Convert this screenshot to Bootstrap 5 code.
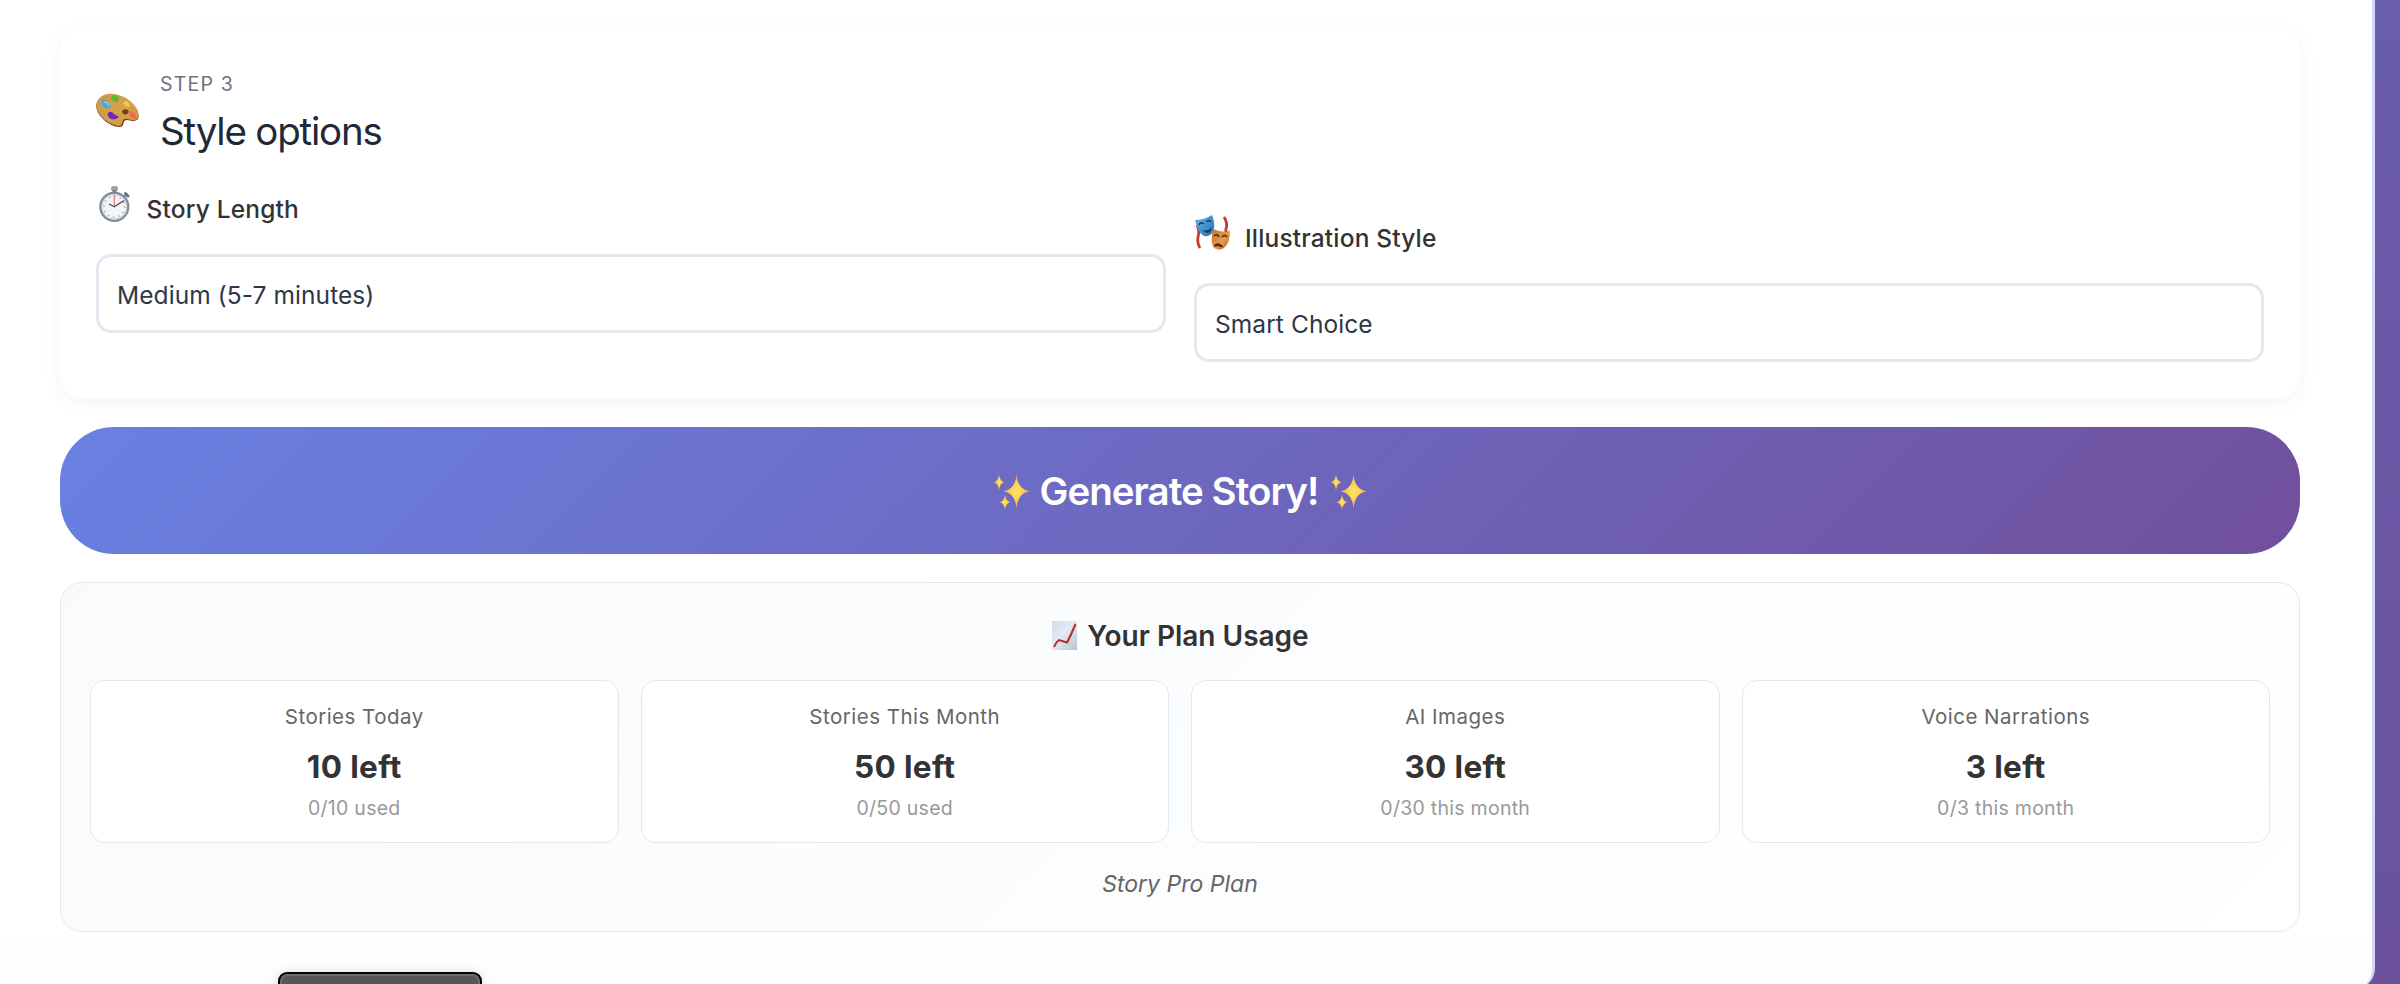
<!DOCTYPE html>
<html lang="en">
<head>
<meta charset="utf-8">
<meta name="viewport" content="width=device-width, initial-scale=1">
<title>Story options</title>
<link rel="stylesheet" href="https://cdn.jsdelivr.net/npm/bootstrap@5.3.0/dist/css/bootstrap.min.css">
<style>
  html, body { height: 100%; }
  body { font-family: Inter, "Liberation Sans", sans-serif; background: linear-gradient(180deg, #6a5dad 0%, #6b519c 100%); overflow: hidden; color: #333; }
  .sheet { width: 2375px; height: 990px; background: linear-gradient(180deg, #fff 94%, #fcfcfc 100%); border-right: 3px solid #d0d9f5; border-bottom-right-radius: 22px; padding: 29px 72px 0 60px; overflow: hidden; }
  .step-card { height: 369px; border-radius: 22px; padding: 36px; background: #fff; box-shadow: 0 4px 20px rgba(0,0,0,.05); }
  .step-head { height: 98px; gap: 21px; }
  .step-label { font-size: 19.5px; line-height: 38px; letter-spacing: 1.2px; color: #6b7280; }
  .step-title { font-size: 38.5px; line-height: 56px; letter-spacing: -1.2px; color: #1f2937; font-weight: 400; }
  .pickers { gap: 28px; }
  .picker-label { height: 91px; font-size: 24.5px; font-weight: 500; line-height: 40px; letter-spacing: .16px; }
  .picker-label span { margin-top: 26px; }
  .picker-box { height: 79px; border: 3px solid #e2e8f0; border-radius: 15px; padding: 3px 18px 0; font-size: 24.5px; letter-spacing: .08px; color: #2d3748; background: #fff; }
  .go { height: 127px; margin-top: 29px; padding-top: 3px; border: 0; border-radius: 54px; color: #fff; font-size: 38.5px; letter-spacing: -.95px; font-weight: 600; background: linear-gradient(135deg, #6981e3 0%, #714f9c 100%); }
  .usage { height: 350px; margin-top: 28px; border: 1px solid #e2e8f0; border-radius: 22px; padding: 31px 29px; background: linear-gradient(135deg, #f8fafc 0%, #fff 100%); }
  .usage-title { height: 66px; font-size: 28px; line-height: 44px; font-weight: 600; padding-left: 1px; }
  .tiles { gap: 22px; }
  .tile { height: 163px; border: 1px solid #e2e8f0; border-radius: 15px; background: #fff; padding-top: 17px; }
  .t-name { font-size: 20.5px; line-height: 38px; letter-spacing: .48px; color: #666; }
  .t-left { font-size: 31.5px; line-height: 61px; letter-spacing: .35px; font-weight: 700; }
  .t-used { font-size: 19.5px; line-height: 22px; letter-spacing: .27px; color: #999; }
  .plan { font-size: 23px; line-height: 34px; margin-top: 24px; font-style: italic; color: #666; }
  .dock { left: 278px; top: 972px; width: 204px; height: 60px; border: 2px solid #000; border-radius: 9px; background: #555658; box-shadow: inset 0 0 0 2px #6b6d6e, 0 0 10px rgba(0,0,0,.12); }
</style>
</head>
<body>
<svg width="0" height="0" class="position-absolute">
  <defs>
    <linearGradient id="wood" x1="0" y1="0" x2="1" y2="1"><stop offset="0" stop-color="#c8964c"/><stop offset=".5" stop-color="#d6a14e"/><stop offset="1" stop-color="#cf9340"/></linearGradient>
    <radialGradient id="gold"><stop offset="0" stop-color="#ffe36a"/><stop offset=".5" stop-color="#fbd04e"/><stop offset="1" stop-color="#e0a04a"/></radialGradient>
    <linearGradient id="paper" x1="0" y1="0" x2="1" y2="1"><stop offset="0" stop-color="#d3dce4"/><stop offset=".45" stop-color="#e3eaf3"/><stop offset="1" stop-color="#b9c3cf"/></linearGradient>
    <linearGradient id="blueface" x1="0" y1="0" x2="1" y2="1"><stop offset="0" stop-color="#64b5ec"/><stop offset="1" stop-color="#2473b8"/></linearGradient>
    <linearGradient id="orangeface" x1="0" y1="0" x2="1" y2="1"><stop offset="0" stop-color="#c4752d"/><stop offset=".6" stop-color="#e59a48"/><stop offset="1" stop-color="#a9561c"/></linearGradient>
    <symbol id="sparkles" viewBox="0 0 36 36">
      <g fill="url(#gold)">
        <path d="M22.500 0Q23.500 15.500 36 17.200Q23.500 19 22.500 35Q21.500 19 9 17.200Q21.500 15.500 22.500 0Z"/>
        <path d="M5 0Q5.600 7.200 10.500 8.300Q5.600 9.400 5 16.500Q4.400 9.400 0 8.300Q4.400 7.200 5 0Z"/>
        <path d="M11 20.500Q11.500 27.200 16.500 28.200Q11.500 29.200 11 36Q10.500 29.200 5.500 28.200Q10.500 27.200 11 20.500Z"/>
      </g>
    </symbol>
  </defs>
</svg>
<main class="sheet">
  <section class="step-card">
    <div class="step-head d-flex">
      <svg width="43" height="35" viewBox="0 0 43 35" style="margin-top:28px">
        <path d="M1 9C6 0 18 0 28 5C38 10 43.500 19 42.500 25C41 29 35 28 31 27C27 27 28 31 26.500 33C23 36 13 32 7 26C1 20-1 14 1 9Z" fill="#6d4218"/>
        <path d="M1.500 8C6-1 18-1 28 4C38 9 44 18 42.500 24C41 28.500 35 27 31 26C26 25 27 30 25 32.500C22 34 13 31 7 25C1 19-1 13 1.500 8ZM28 16.500C25 17.500 26 21.500 29 21.500C33 21.500 34 18 31 16.500Q29 15.800 28 16.500Z" fill="url(#wood)" fill-rule="evenodd"/>
        <path d="M6 7C10 5 12 10 15 13C15 16 10 16 7 13Q4 9 6 7Z" fill="#49a9d8"/><path d="M8 9q4 0 5 4" fill="none" stroke="#7ed3ef" stroke-width="1.500"/>
        <path d="M16 3Q18 1 20 3Q25 5 22 8.500Q17 10 15 6Z" fill="#57b92c"/>
        <path d="M27 10Q30 6 33 10L34 14Q29 14 27 10Z" fill="#f1cb43"/>
        <path d="M34 18Q38 18 41 25Q38 27 34 23Z" fill="#ec6850"/>
        <path d="M12 20Q15 17 18 21L23 24Q19 28 14 25.500Q11 23 12 20Z" fill="#6a2bb5"/>
      </svg>
      <div><div class="step-label"><span>STEP 3</span></div><h2 class="step-title m-0">Style options</h2></div>
    </div>
    <div class="pickers d-flex">
      <div class="flex-fill w-50">
        <div class="picker-label d-flex">
          <svg width="31" height="36" viewBox="0 0 31 36" style="margin:23px 16.500px 0 3px">
            <rect x="12" y="0" width="7" height="5" rx="2" fill="#9ca2aa"/><rect x="13.500" y="4" width="4" height="4" fill="#777e88"/>
            <path d="M25 11L28 8" stroke="#6e7886" stroke-width="1.800"/><path d="M26.500 7.500l2.500 2.500" stroke="#67717e" stroke-width="3" stroke-linecap="round"/>
            <circle cx="15.300" cy="20.800" r="14" fill="#f4f5f5" stroke="#7f8b9c" stroke-width="2.200"/>
            <circle cx="15.300" cy="20.800" r="12.300" fill="none" stroke="#c5cdd6" stroke-width="1"/>
            <circle cx="15.300" cy="20.800" r="10.300" fill="none" stroke="#999" stroke-width="1.600" stroke-dasharray="1 4.390"/>
            <path d="M15.300 20.500V9" stroke="#ef8e80" stroke-width="1.500"/><path d="M10 18L15.300 20.800L25 14.500" fill="none" stroke="#4b4f55" stroke-width="1.300"/>
          </svg><span>Story Length</span>
        </div>
        <div class="picker-box d-flex align-items-center"><span>Medium (5-7 minutes)</span></div>
      </div>
      <div class="flex-fill w-50" style="padding-top:29px">
        <div class="picker-label d-flex">
          <svg width="36" height="36" viewBox="0 0 36 36" style="margin:23px 14px 0 1px">
            <path d="M2 10Q5 16 3 22Q2 28 5 33M29 2Q33 8 31 14Q30 18 33 19" fill="none" stroke="#c93a2e" stroke-width="2.800"/>
            <path d="M0 5Q9 5 17 0Q21 9 18 17Q15 22 9 21Q3 18 0 5Z" fill="url(#blueface)"/>
            <path d="M4 10q2-4 5-1M11 7q3-3 5 0" fill="none" stroke="#173d62" stroke-width="1.600"/><path d="M7 15q6 2 10-3q-1 6-5 6q-3-1-5-3Z" fill="#173d62"/>
            <path d="M18 14Q27 18 35 16Q35 27 30 32Q25 37 19 33Q15 28 18 14Z" fill="url(#orangeface)"/>
            <path d="M19 21q3-3 5 1M27 22q3-3 5 0" fill="none" stroke="#4b2512" stroke-width="1.600"/><path d="M19 31q4-5 9 1q-5-2-9-1Z" fill="#4b2512" stroke="#4b2512"/>
          </svg><span>Illustration Style</span>
        </div>
        <div class="picker-box d-flex align-items-center"><span>Smart Choice</span></div>
      </div>
    </div>
  </section>
  <button class="go d-flex w-100 align-items-center justify-content-center" type="button">
    <svg width="36" height="36"><use href="#sparkles"/></svg><span style="margin:0 12px 0 10px">Generate Story!</span><svg width="36" height="36"><use href="#sparkles"/></svg>
  </button>
  <section class="usage text-center">
    <div class="usage-title d-flex justify-content-center">
      <svg width="25" height="29" viewBox="0 0 25 29" style="margin:7px 10px 0 0"><rect width="25" height="29" fill="url(#paper)"/><path d="M2 26Q4 21 7 19L15 21.500Q19 14 23.500 3" fill="none" stroke="#b82b2d" stroke-width="2"/></svg><span>Your Plan Usage</span>
    </div>
    <div class="tiles d-flex">
      <div class="tile flex-fill w-25"><div class="t-name"><span>Stories Today</span></div><div class="t-left"><span>10 left</span></div><div class="t-used"><span>0/10 used</span></div></div>
      <div class="tile flex-fill w-25"><div class="t-name"><span>Stories This Month</span></div><div class="t-left"><span>50 left</span></div><div class="t-used"><span>0/50 used</span></div></div>
      <div class="tile flex-fill w-25"><div class="t-name"><span>AI Images</span></div><div class="t-left"><span>30 left</span></div><div class="t-used"><span>0/30 this month</span></div></div>
      <div class="tile flex-fill w-25"><div class="t-name"><span>Voice Narrations</span></div><div class="t-left"><span>3 left</span></div><div class="t-used"><span>0/3 this month</span></div></div>
    </div>
    <div class="plan"><span>Story Pro Plan</span></div>
  </section>
</main>
<div class="dock position-absolute"></div>
<script src="https://cdn.jsdelivr.net/npm/bootstrap@5.3.0/dist/js/bootstrap.bundle.min.js"></script>
</body>
</html>
